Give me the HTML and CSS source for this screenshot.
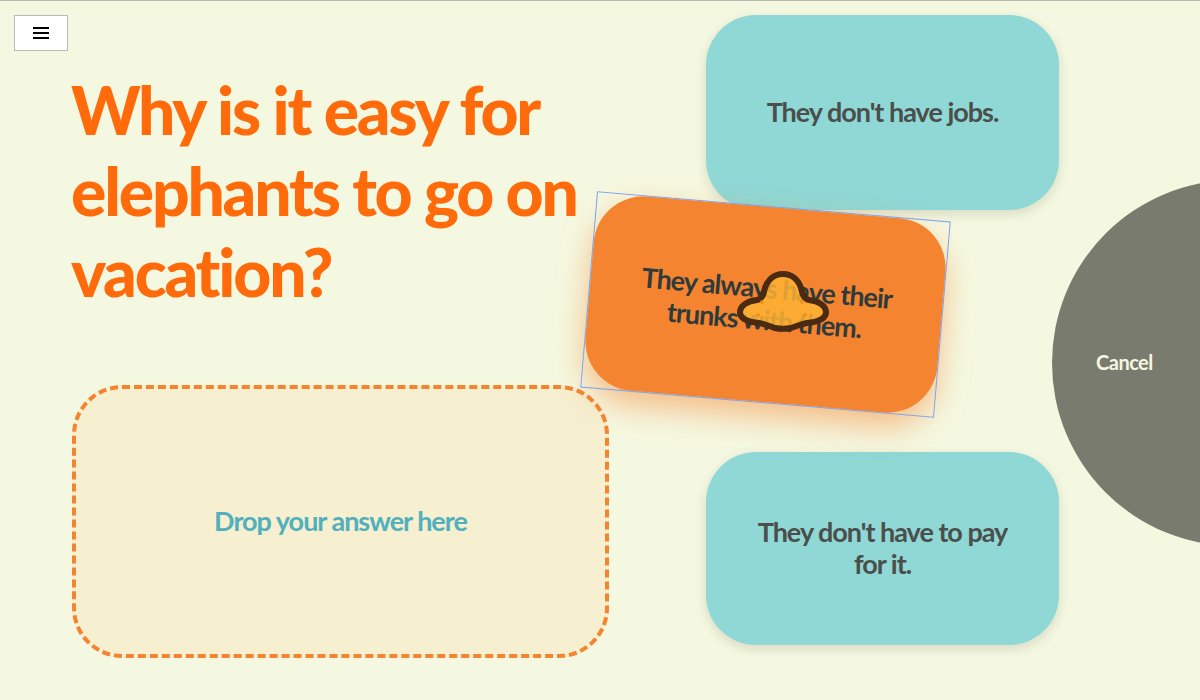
FILE: index.html
```html
<!DOCTYPE html>
<html>

<head>
  <title>Elephant Quiz</title>
  <link rel="stylesheet" href="styles.css">
</head>

<body>
  <div class="page">
    <section class="question-col">
      <button class="menu-btn" aria-label="Menu">
        <svg width="16" height="12" viewBox="0 0 16 12">
          <rect x="0" y="0" width="16" height="2"></rect>
          <rect x="0" y="5" width="16" height="2"></rect>
          <rect x="0" y="10" width="16" height="2"></rect>
        </svg>
      </button>
      <h1 class="question">Why is it easy for elephants to go on vacation?</h1>
      <div class="drop-zone">Drop your answer here</div>
    </section>
    <section class="answer-col">
      <div class="answer">They don't have jobs.</div>
      <div class="answer answer-low">They don't have to pay for it.</div>
    </section>
  </div>

  <div class="drag-box">
    <div class="answer answer-dragged">They always have their trunks with them.</div>
  </div>

  <div class="cancel">Cancel</div>

  <svg class="cursor" width="100" height="68" viewBox="0 0 100 68">
    <path class="cursor-body" d="M50 6 C60 6 67 13 69 24 C70 29 72 31 76 32 C86 33 93 38 93 44 C93 51 84 54 74 55 C68 56 64 58 58 60 C53 61 47 61 42 60 C36 58 32 56 26 55 C16 54 7 51 7 44 C7 38 14 33 24 32 C28 31 30 29 31 24 C33 13 40 6 50 6 Z"></path>
    <circle class="cursor-dot" cx="29" cy="34" r="2"></circle>
    <circle class="cursor-dot" cx="69" cy="34" r="2"></circle>
    <circle class="cursor-dot" cx="25" cy="47" r="2"></circle>
    <circle class="cursor-dot" cx="72" cy="47" r="2"></circle>
  </svg>
</body>

</html>
```

FILE: styles.css
```css
body {
  background-color: #f5f8e0;
  font-family: 'Lato', sans-serif;
  font-variant-ligatures: none;
  margin: 0;
  padding: 0;
  height: 700px;
  overflow: hidden;
  position: relative;
}

.page {
  display: flex;
  height: 700px;
  box-sizing: border-box;
  border-top: 1px solid #bbbbb5;
}

.question-col {
  width: 706px;
  box-sizing: border-box;
  padding: 14px 0 0 14px;
}

.menu-btn {
  display: flex;
  align-items: center;
  justify-content: center;
  width: 54px;
  height: 36px;
  padding: 0;
  border: 1px solid #bbb;
  background-color: #fff;
  cursor: pointer;
}

.question {
  width: 520px;
  margin: 18px 0 0 57px;
  color: #ff6a0a;
  font-size: 66px;
  line-height: 81px;
  font-weight: 900;
  letter-spacing: -2.2px;
}

.drop-zone {
  display: flex;
  align-items: center;
  justify-content: center;
  box-sizing: border-box;
  width: 537px;
  height: 273px;
  margin: 73px 0 0 58px;
  padding-bottom: 2px;
  border: 4px dashed #f58430;
  border-radius: 50px;
  background-color: #f6efd0;
  color: #52b0bd;
  font-size: 27px;
  font-weight: 700;
  letter-spacing: -1px;
}

.answer-col {
  display: flex;
  flex-direction: column;
  justify-content: space-between;
  width: 353px;
  padding: 14px 0 55px;
}

.answer {
  display: flex;
  align-items: center;
  justify-content: center;
  box-sizing: border-box;
  width: 353px;
  height: 195px;
  padding: 0 40px 2px;
  border-radius: 50px;
  background-color: #90d8d5;
  box-shadow: 0px 4px 12px rgba(0, 0, 0, 0.12);
  color: #4a4f4c;
  font-size: 27px;
  line-height: 32px;
  font-weight: 700;
  letter-spacing: -1px;
  text-align: center;
}

.answer-low {
  height: 193px;
}

.drag-box {
  position: absolute;
  left: 589px;
  top: 207px;
  transform: rotate(4.9deg);
  outline: 1px solid #7aa5f0;
}

.answer-dragged {
  background-color: #f58430;
  box-shadow: 0px 14px 30px rgba(245, 132, 48, 0.5);
  color: #2f3a3a;
}

.cancel {
  position: absolute;
  left: 1052px;
  top: 180px;
  display: flex;
  align-items: center;
  box-sizing: border-box;
  width: 366px;
  height: 366px;
  padding: 0 0 3px 44px;
  border-radius: 50%;
  background-color: #7a7b6f;
  color: #f5f8e0;
  font-size: 20px;
  font-weight: 700;
  letter-spacing: -0.5px;
}

.cursor {
  position: absolute;
  left: 733px;
  top: 268px;
}

.cursor-body {
  fill: rgba(253, 178, 52, 0.85);
  stroke: #4a2a10;
  stroke-width: 6;
}

.cursor-dot {
  fill: rgba(232, 140, 30, 0.8);
}
```
